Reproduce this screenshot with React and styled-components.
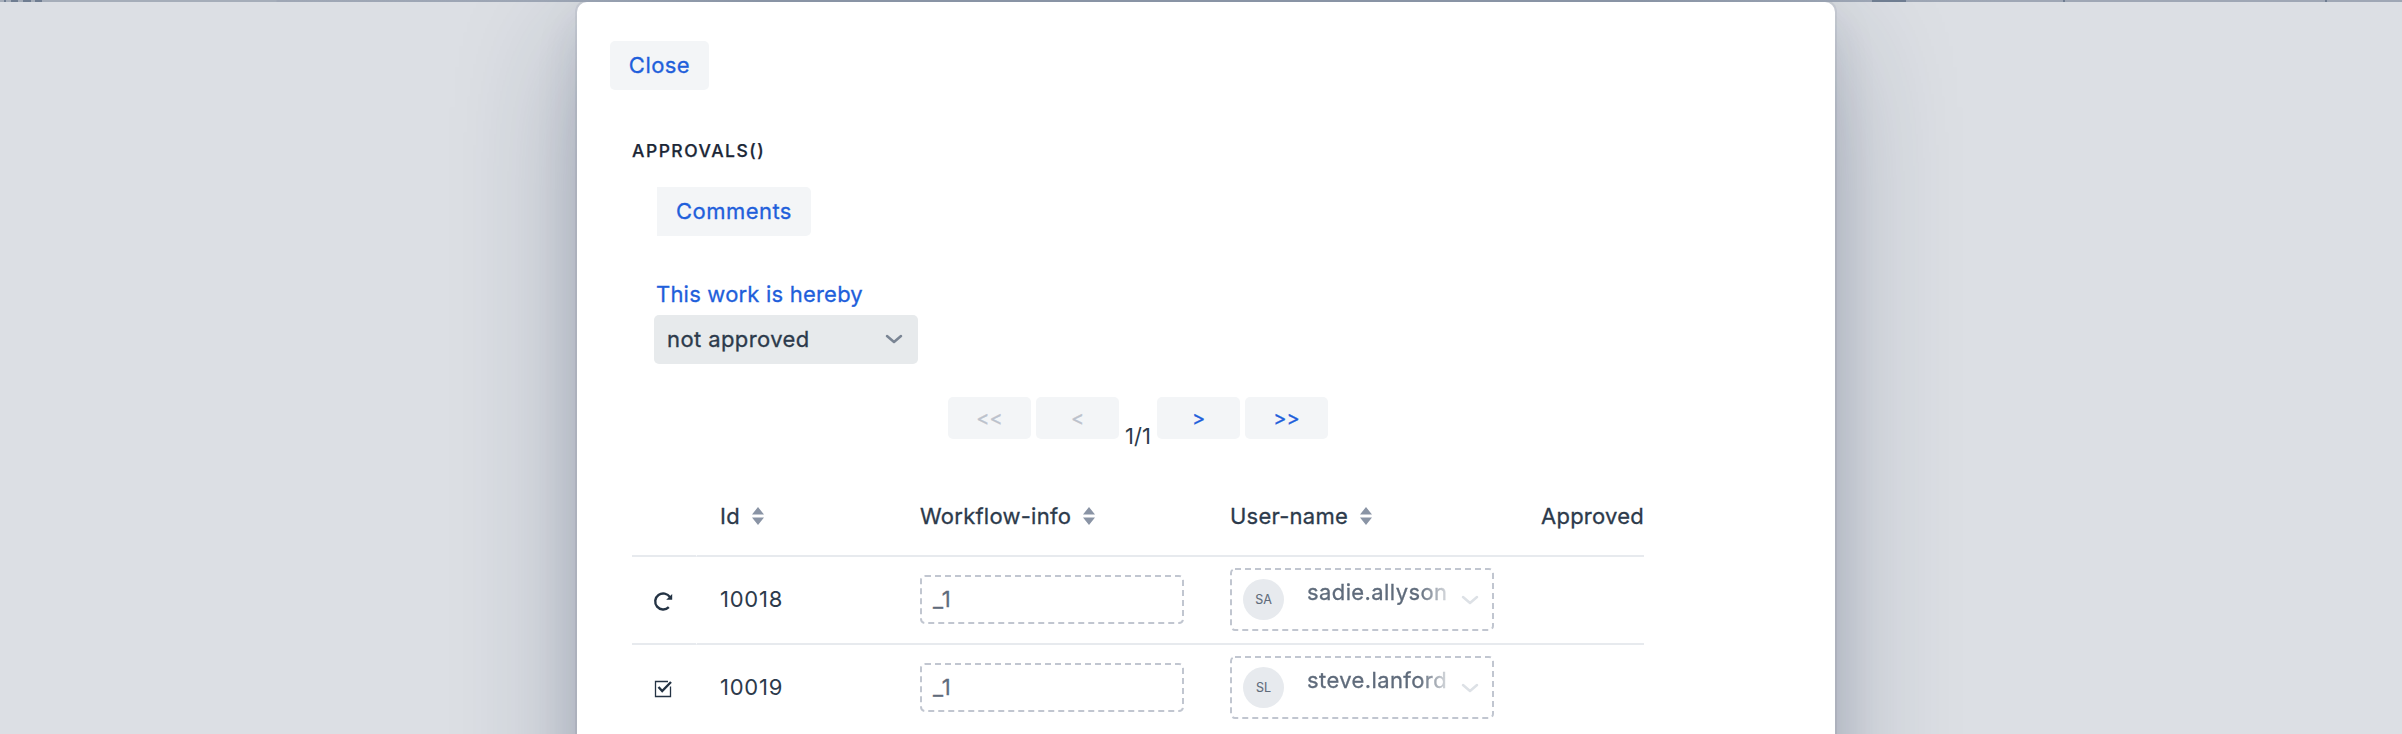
import React from "react";
import styled, { createGlobalStyle, css } from "styled-components";

const Global = createGlobalStyle`
  * { box-sizing: border-box; }
  body { margin: 0; overflow: hidden; font-family: Inter, sans-serif; font-size: 22px; color: #2c3a4b; background: #dcdfe4; }
  button { font-family: inherit; }
`;

const mediumText = css`
  font-weight: 400;
  -webkit-text-stroke: 0.3px currentColor;
`;

const Page = styled.div`
  height: 734px;
  overflow: hidden;
  display: flex;
  flex-direction: column;
  background: #dcdfe4;
`;

const TopStrip = styled.header`
  height: 2px;
  flex: none;
  position: relative;
  z-index: 1;
  overflow: hidden;
  display: flex;
  background: linear-gradient(90deg, #a5adb9 0, #a5adb9 276px, #9fa7b5 277px, #9ca5b4 540px, #8994a5 760px, #8994a5 1640px, #9ca5b4 1870px, #9fa7b5 2000px);
`;

const StripMark = styled.span`
  height: 2px;
  flex: none;
  width: ${(p) => p.$w}px;
  margin-left: ${(p) => p.$gap}px;
  background: #6f7d91;
`;

const Dialog = styled.main`
  width: 1258px;
  height: 900px;
  flex: none;
  margin-left: 577px;
  padding: 39px 33px 0;
  display: flex;
  flex-direction: column;
  align-items: flex-start;
  background: #fff;
  border-radius: 10px;
  box-shadow: 0 0 0 2px rgba(28, 48, 74, 0.07), 0 16px 48px -4px rgba(24, 39, 75, 0.12), 0 36px 130px -8px rgba(24, 39, 75, 0.32);
`;

const buttonBase = css`
  ${mediumText}
  border: 0;
  background: #f3f5f7;
  color: #1f5fdb;
  padding: 0;
`;

const Button = styled.button`
  ${buttonBase}
  width: ${(p) => p.$w}px;
  height: 49px;
  font-size: 22px;
  line-height: 49px;
  letter-spacing: 0.45px;
  border-radius: ${(p) => (p.$flatLeft ? "0 5px 5px 0" : "5px")};
`;

const Content = styled.section`
  width: 1012px;
  margin: 49px 0 0 22px;
  display: flex;
  flex-direction: column;
  align-items: flex-start;
`;

const Title = styled.h5`
  margin: 0 0 24px;
  font-size: 17.5px;
  line-height: 24px;
  font-weight: 500;
  -webkit-text-stroke: 0.25px currentColor;
  letter-spacing: 1.5px;
  color: #1c2737;
`;

const Form = styled.div`
  padding-left: 22px;
`;

const Indent = styled.div`
  padding-left: 3px;
`;

const Label = styled.label`
  ${mediumText}
  display: block;
  margin: 43px 0 6px;
  padding-left: 2px;
  line-height: 30px;
  letter-spacing: 0.2px;
  color: #1f5fdb;
`;

const Select = styled.div`
  ${mediumText}
  width: 264px;
  height: 49px;
  padding: 0 15px 1px 13px;
  display: flex;
  align-items: center;
  justify-content: space-between;
  border-radius: 5px;
  background: #e7eaec;
  letter-spacing: 0.4px;
`;

const Pager = styled.nav`
  align-self: center;
  margin: 33px 0 0;
  display: flex;
  align-items: flex-start;
  gap: 5px;
`;

const PageButton = styled.button`
  ${buttonBase}
  width: 83px;
  height: 42px;
  font-size: 20px;
  line-height: 43px;
  letter-spacing: 0;
  border-radius: 5px;
  &:disabled { color: #bcc2cc; }
`;

const PageCount = styled.span`
  width: 28px;
  margin-top: 24px;
  line-height: 30px;
  text-align: center;
  white-space: nowrap;
`;

const Grid = styled.div`
  width: 1012px;
  margin-top: 24px;
`;

const Cell = styled.div`
  display: flex;
  align-items: center;
  gap: 12px;
  padding: 0 0 1px 23px;
  white-space: nowrap;
  border-bottom: 2px solid #e7eaee;
`;

const IdCell = styled(Cell)`
  padding-bottom: 3px;
`;

const Row = styled.div`
  display: grid;
  grid-template-columns: 65px 200px 310px 311px 126px;
  height: ${(p) => (p.$head ? 82 : 88)}px;
  letter-spacing: 0.75px;
  ${(p) => p.$head && css`
    ${mediumText}
    letter-spacing: 0.25px;
    ${Cell} { padding-top: 3px; }
  `}
  &:last-child ${Cell} { border-bottom-color: transparent; }
`;

const IconCell = styled(Cell)`
  padding-left: 21px;
  padding-top: 3px;
  border-right: 1px solid #fff;
`;

const Field = styled.div`
  ${mediumText}
  position: relative;
  width: 264px;
  height: ${(p) => (p.$tall ? 63 : 49)}px;
  display: flex;
  align-items: center;
  padding-left: 13px;
  color: #5f6b7b;
  & > svg:first-child { position: absolute; inset: 0; }
`;

const Value = styled.span`
  padding-bottom: 1px;
  letter-spacing: 1.2px;
`;

const Avatar = styled.span`
  width: 41px;
  height: 41px;
  flex: none;
  border-radius: 50%;
  background: #e7eaee;
  color: #5f6b7b;
  font-size: 12.5px;
  line-height: 41px;
  text-align: center;
  letter-spacing: 0;
  -webkit-text-stroke: 0.1px currentColor;
`;

const Name = styled.span`
  width: 140px;
  flex: none;
  margin: 0 14px 16px 11px;
  line-height: 30px;
  letter-spacing: 0.4px;
  mask-image: linear-gradient(90deg, #000 112px, rgba(0, 0, 0, 0.25) 140px);
`;

const UserValue = styled.div`
  display: flex;
  align-items: center;
  gap: 12px;
`;

const Dashes = ({ h }) => (
  <svg width="264" height={h} fill="none" stroke="#c1c6d0" strokeWidth="2">
    <rect x="1" y="1" width="262" height={h - 2} rx="4" strokeDasharray="6 4" />
  </svg>
);

const Chevron = ({ color }) => (
  <svg width="18" height="12" viewBox="0 0 18 12" fill="none" stroke={color} strokeWidth="2.5" strokeLinecap="round" strokeLinejoin="round">
    <path d="M2 3L9 9L16 3" />
  </svg>
);

const Sorter = () => (
  <svg width="12" height="18" viewBox="0 0 12 18" fill="#8a94a5">
    <path d="M6 0L12 7.5H0ZM0 10.5H12L6 18Z" />
  </svg>
);

const Reload = () => (
  <svg width="20" height="20" viewBox="0 0 20 20" fill="none" stroke="#243344" strokeWidth="2.4">
    <path d="M15.8 16.2A8 8 0 1 1 17 6.2" />
    <path d="M19.2 3V8.8H13.2Z" fill="#243344" stroke="none" />
  </svg>
);

const Checked = () => (
  <svg width="20" height="20" viewBox="0 0 20 20" fill="none" stroke="#243344">
    <path d="M15 2.5H2.5V17.5H17.5V7.5" strokeWidth="1.3" />
    <path d="M5.5 8L9.2 12L18 3" strokeWidth="2.4" />
  </svg>
);

const rows = [
  { id: "10018", initials: "SA", name: "sadie.allyson", icon: <Reload /> },
  { id: "10019", initials: "SL", name: "steve.lanford", icon: <Checked /> },
];

export default function App() {
  return (
    <Page>
      <Global />
      <TopStrip>
        <StripMark $w={2} $gap={4} />
        <StripMark $w={7} $gap={5} />
        <StripMark $w={8} $gap={5} />
        <StripMark $w={7} $gap={4} />
        <StripMark $w={34} $gap={1830} />
        <StripMark $w={2} $gap={157} />
        <StripMark $w={2} $gap={260} />
      </TopStrip>
      <Dialog>
        <Button $w={99}>Close</Button>
        <Content>
          <Title>APPROVALS()</Title>
          <Form>
            <Indent><Button $w={154} $flatLeft>Comments</Button></Indent>
            <Label>This work is hereby</Label>
            <Select>not approved<Chevron color="#7a8594" /></Select>
          </Form>
          <Pager>
            <PageButton disabled>&lt;&lt;</PageButton>
            <PageButton disabled>&lt;</PageButton>
            <PageCount>1/1</PageCount>
            <PageButton>&gt;</PageButton>
            <PageButton>&gt;&gt;</PageButton>
          </Pager>
          <Grid>
            <Row $head>
              <IconCell />
              <Cell>Id<Sorter /></Cell>
              <Cell>Workflow-info<Sorter /></Cell>
              <Cell>User-name<Sorter /></Cell>
              <Cell>Approved</Cell>
            </Row>
            {rows.map((r) => (
              <Row key={r.id}>
                <IconCell>{r.icon}</IconCell>
                <IdCell>{r.id}</IdCell>
                <Cell>
                  <Field>
                    <Dashes h={49} />
                    <Value>_1</Value>
                  </Field>
                </Cell>
                <Cell>
                  <Field $tall>
                    <Dashes h={63} />
                    <UserValue>
                      <Avatar>{r.initials}</Avatar>
                      <Name>{r.name}</Name>
                    </UserValue>
                    <Chevron color="#dde1e6" />
                  </Field>
                </Cell>
                <Cell />
              </Row>
            ))}
          </Grid>
        </Content>
      </Dialog>
    </Page>
  );
}
